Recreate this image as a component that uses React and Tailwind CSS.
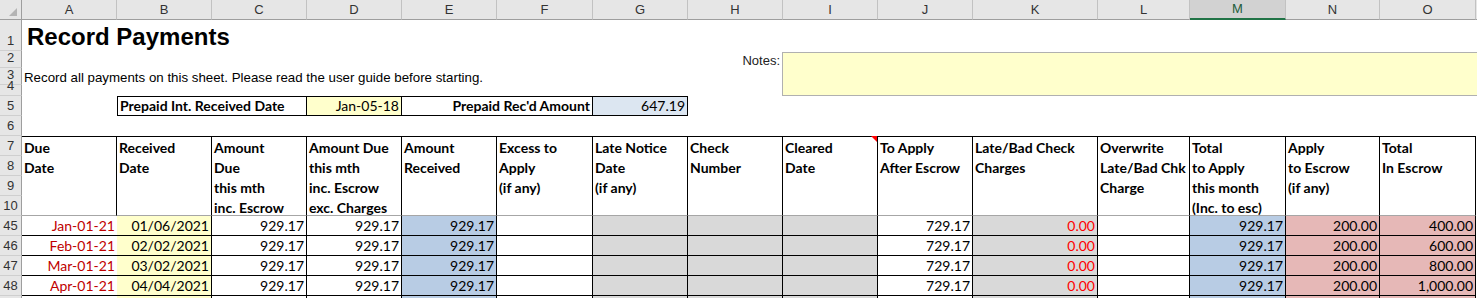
import React from 'react';

const colStart = [
  'col-start-2', 'col-start-3', 'col-start-4', 'col-start-5', 'col-start-6',
  'col-start-7', 'col-start-8', 'col-start-9', 'col-start-10', 'col-start-11',
  'col-start-12', 'col-start-13', 'col-start-14', 'col-start-15', 'col-start-16',
  'col-start-17',
];

const rowStart = {
  1: 'row-start-2', 2: 'row-start-3', 3: 'row-start-4', 4: 'row-start-5',
  5: 'row-start-6', 6: 'row-start-7', 7: 'row-start-8', 8: 'row-start-9',
  9: 'row-start-10', 10: 'row-start-11', 45: 'row-start-12', 46: 'row-start-13',
  47: 'row-start-14', 48: 'row-start-15', 49: 'row-start-16',
};

const letters = ['A', 'B', 'C', 'D', 'E', 'F', 'G', 'H', 'I', 'J', 'K', 'L', 'M', 'N', 'O', ''];
const rowNums = [1, 2, 3, 4, 5, 6, 7, 8, 9, 10, 45, 46, 47, 48, 49];

const headers = [
  ['Due', 'Date'],
  ['Received', 'Date'],
  ['Amount', 'Due', 'this mth', 'inc. Escrow'],
  ['Amount Due', 'this mth', 'inc. Escrow', 'exc. Charges'],
  ['Amount', 'Received'],
  ['Excess to', 'Apply', '(if any)'],
  ['Late Notice', 'Date', '(if any)'],
  ['Check', 'Number'],
  ['Cleared', 'Date'],
  ['To Apply', 'After Escrow'],
  ['Late/Bad Check', 'Charges'],
  ['Overwrite', 'Late/Bad Chk', 'Charge'],
  ['Total', 'to Apply', 'this month', '(Inc. to esc)'],
  ['Apply', 'to Escrow', '(if any)'],
  ['Total', 'In Escrow'],
];

const payments = [
  { n: 45, due: 'Jan-01-21', rec: '01/06/2021', esc: '400.00' },
  { n: 46, due: 'Feb-01-21', rec: '02/02/2021', esc: '600.00' },
  { n: 47, due: 'Mar-01-21', rec: '03/02/2021', esc: '800.00' },
  { n: 48, due: 'Apr-01-21', rec: '04/04/2021', esc: '1,000.00' },
  { n: 49, blank: true },
];

const colStyle = [
  'text-[#c00000]',
  'bg-[#ffffcc] border-r border-black',
  'border-r border-black',
  'border-r border-black',
  'bg-[#b8cce4] border-r border-black',
  'border-r border-black',
  'bg-[#d9d9d9] border-r border-black',
  'bg-[#d9d9d9] border-r border-black',
  'bg-[#d9d9d9] border-r border-black',
  'border-r border-black',
  'bg-[#d9d9d9] text-[#ff0000] border-r border-black',
  'border-r border-black',
  'bg-[#b8cce4] border-r border-black',
  'bg-[#e6b8b7] border-r border-black',
  'bg-[#e6b8b7] border-r border-black',
];

const cal = "font-['Lato',sans-serif] text-[14px]";
const arial = "font-['Liberation_Sans',Arial,sans-serif]";

function rowValues(p) {
  if (p.blank) return Array(15).fill('');
  return [p.due, p.rec, '929.17', '929.17', '929.17', '', '', '', '', '729.17', '0.00', '', '929.17', '200.00', p.esc];
}

export default function App() {
  return (
    <div className="h-[298px] w-[1477px] overflow-hidden bg-white text-black">
      <div className="grid grid-cols-[22px_95px_95px_95px_95px_95px_96px_95px_95px_95px_95px_125px_92px_96px_94px_96px_100px] grid-rows-[20px_31px_17px_17px_11px_20px_20px_20px_20px_20px_20px_20px_20px_20px_20px_20px]">
        {/* corner */}
        <div className="col-start-1 row-start-1 bg-[#e6e6e6] border-r border-b border-[#9e9e9e] flex items-end justify-end pr-[4px] pb-[3px]">
          <svg width="8" height="8" viewBox="0 0 8 8">
            <polygon points="8,0 8,8 0,8" fill="#b4b4b4" />
          </svg>
        </div>

        {/* column letters */}
        {letters.map((l, i) => (
          <div
            key={i}
            className={`${colStart[i]} row-start-1 flex items-center justify-center border-r border-[#c2c2c2] ${arial} text-[13px] ${
              l === 'M'
                ? 'bg-[#d2d2d2] border-b-2 border-b-[#217346] text-[#1d5c3a]'
                : 'bg-[#e6e6e6] border-b border-b-[#9e9e9e] text-[#333]'
            }`}
          >
            {l}
          </div>
        ))}

        {/* row numbers */}
        {rowNums.map((n) => (
          <div
            key={n}
            className={`col-start-1 ${rowStart[n]} bg-[#e6e6e6] border-r border-[#9e9e9e] border-b border-b-[#cfcfcf] flex items-end justify-center pb-[1px] ${arial} text-[13px] leading-4 text-[#333]`}
          >
            {n === 49 ? '' : n}
          </div>
        ))}

        {/* title */}
        <div className={`col-start-2 col-span-6 row-start-2 flex items-end pl-[5px] pb-[2px] ${arial} text-[24px] leading-[24px] font-bold whitespace-nowrap`}>
          Record Payments
        </div>

        {/* notes */}
        <div className={`col-start-9 row-start-3 flex items-end justify-end pr-[3px] ${arial} text-[13px] leading-[15px] text-[#222]`}>
          Notes:
        </div>
        <div className="col-start-10 col-span-8 row-start-3 row-span-3 -ml-px mt-px bg-[#ffffcc] border border-[#b0b0b0]" />

        <div className={`col-start-2 col-span-9 row-start-4 flex items-end pl-[2px] ${arial} text-[13.3px] leading-[15px] whitespace-nowrap`}>
          Record all payments on this sheet. Please read the user guide before starting.
        </div>

        {/* prepaid */}
        <div className={`col-start-3 col-span-2 row-start-6 flex items-end pl-[2px] border border-black font-bold leading-[18px] ${cal} whitespace-nowrap`}>
          Prepaid Int. Received Date
        </div>
        <div className={`col-start-5 row-start-6 flex items-end justify-end pr-[2px] border-y border-r border-black bg-[#ffffcc] leading-[18px] ${cal}`}>
          Jan-05-18
        </div>
        <div className={`col-start-6 col-span-2 row-start-6 flex items-end justify-end pr-[2px] border-y border-r border-black font-bold leading-[18px] ${cal} whitespace-nowrap`}>
          Prepaid Rec'd Amount
        </div>
        <div className={`col-start-8 row-start-6 flex items-end justify-end pr-[2px] border-y border-r border-black bg-[#dce6f1] leading-[18px] ${cal}`}>
          647.19
        </div>

        {/* table header */}
        {headers.map((lines, i) => (
          <div
            key={i}
            className={`${colStart[i]} row-start-8 row-span-4 relative border-t border-r border-t-black border-r-black border-b border-b-[#a6a6a6] pl-[2px] pt-px font-bold leading-[20px] ${cal} whitespace-nowrap`}
          >
            {lines.map((t) => (
              <div key={t}>{t}</div>
            ))}
            {i === 8 && (
              <svg className="absolute right-0 -top-px" width="6" height="6" viewBox="0 0 6 6">
                <polygon points="0,0 6,0 6,6" fill="#ff0000" />
              </svg>
            )}
          </div>
        ))}

        {/* data */}
        {payments.map((p) =>
          rowValues(p).map((v, i) => (
            <div
              key={`${p.n}-${i}`}
              className={`${colStart[i]} ${rowStart[p.n]} flex items-end justify-end pr-[2px] border-b border-b-black leading-[18px] ${cal} ${colStyle[i]}`}
            >
              {v}
            </div>
          ))
        )}
      </div>
    </div>
  );
}
